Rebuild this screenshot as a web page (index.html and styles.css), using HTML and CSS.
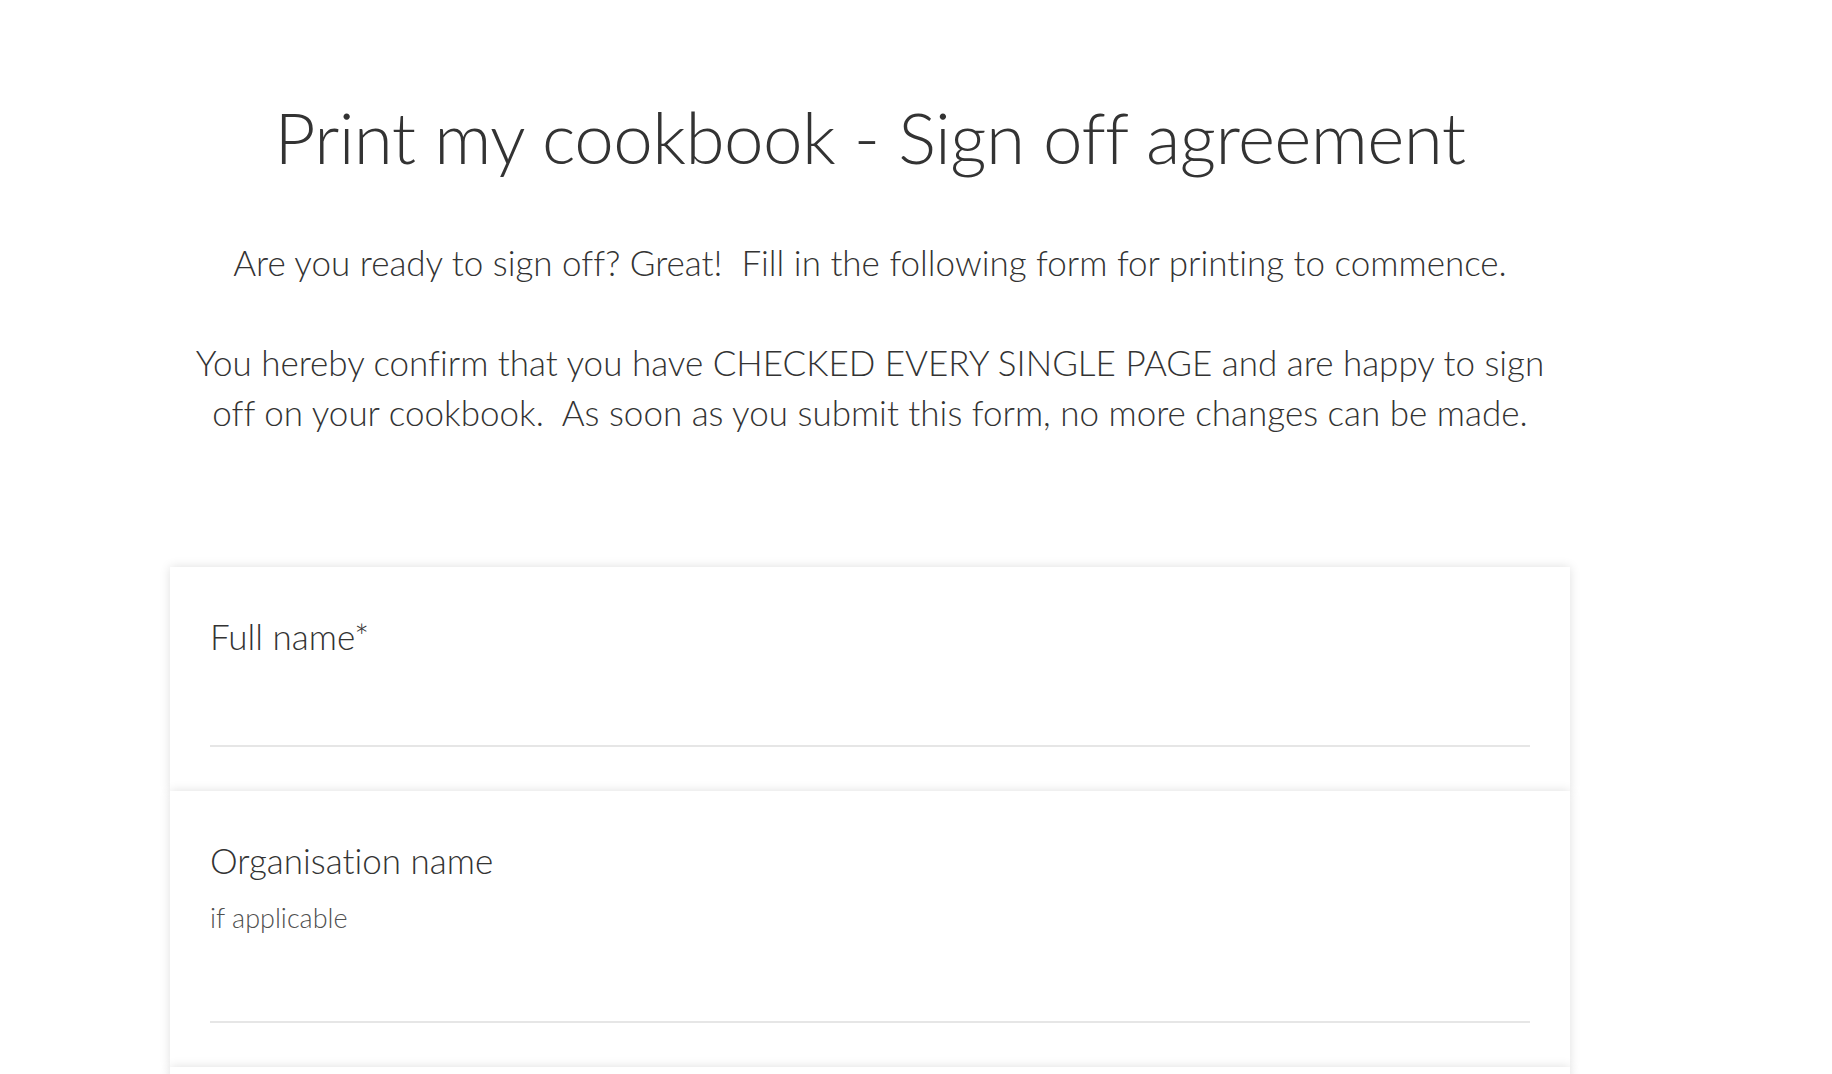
FILE: index.html
```html
<!DOCTYPE html>
<html lang="en">
<head>
<meta charset="utf-8">
<title>Print my cookbook - Sign off agreement</title>
<link rel="stylesheet" href="styles.css">
</head>
<body>
<main class="page">
  <h1 class="title">Print my cookbook - Sign off agreement</h1>
  <div class="intro">
    <p>Are you ready to sign off? Great!&nbsp; Fill in the following form for printing to commence.</p>
    <p>You hereby confirm that you have CHECKED EVERY SINGLE PAGE and are happy to sign off on your cookbook.&nbsp; As soon as you submit this form, no more changes can be made.</p>
  </div>
  <form class="form">
    <div class="card">
      <label class="label" for="fullname">Full name*</label>
      <input class="field" id="fullname" type="text">
    </div>
    <div class="card">
      <label class="label" for="org">Organisation name</label>
      <div class="hint">if applicable</div>
      <input class="field" id="org" type="text">
    </div>
    <div class="card">
      <label class="label" for="email">Email address*</label>
      <input class="field" id="email" type="text">
    </div>
  </form>
</main>
</body>
</html>
```

FILE: styles.css
```css
html, body {
  margin: 0;
  padding: 0;
  background: #ffffff;
}

body {
  font-family: Lato, "Open Sans", "Liberation Sans", sans-serif;
  font-weight: 300;
  color: #333333;
  font-variant-ligatures: no-common-ligatures;
}

.page {
  width: 1400px;
  margin-left: 170px;
  display: flex;
  flex-direction: column;
  align-items: center;
}

.title {
  margin: 93px 0 0;
  font-size: 71px;
  font-weight: 300;
  letter-spacing: -0.6px;
  line-height: 88px;
  text-align: center;
  color: #333333;
}

.intro {
  margin-top: 56px;
  max-width: 1372px;
  text-align: center;
  font-size: 35px;
  line-height: 50px;
}

.intro p {
  margin: 0 0 50px;
}

.intro p:last-child {
  margin-bottom: 0;
}

.form {
  align-self: stretch;
  margin-top: 130px;
  display: flex;
  flex-direction: column;
}

.card {
  background: #ffffff;
  box-shadow: 0 0 10px rgba(0, 0, 0, 0.13);
  padding: 45px 40px 44px;
  display: flex;
  flex-direction: column;
}

.label {
  font-size: 35px;
  line-height: 49px;
  color: #333333;
}

.hint {
  margin-top: 15px;
  font-size: 27px;
  line-height: 36px;
  color: #505050;
}

.field {
  margin-top: 20px;
  height: 64px;
  box-sizing: content-box;
  padding: 0;
  border: none;
  border-bottom: 2px solid #e6e6e6;
  background: transparent;
  font-family: inherit;
  font-weight: 300;
  font-size: 30px;
  color: #333333;
  outline: none;
}

.hint + .field {
  margin-top: 21px;
}
```
